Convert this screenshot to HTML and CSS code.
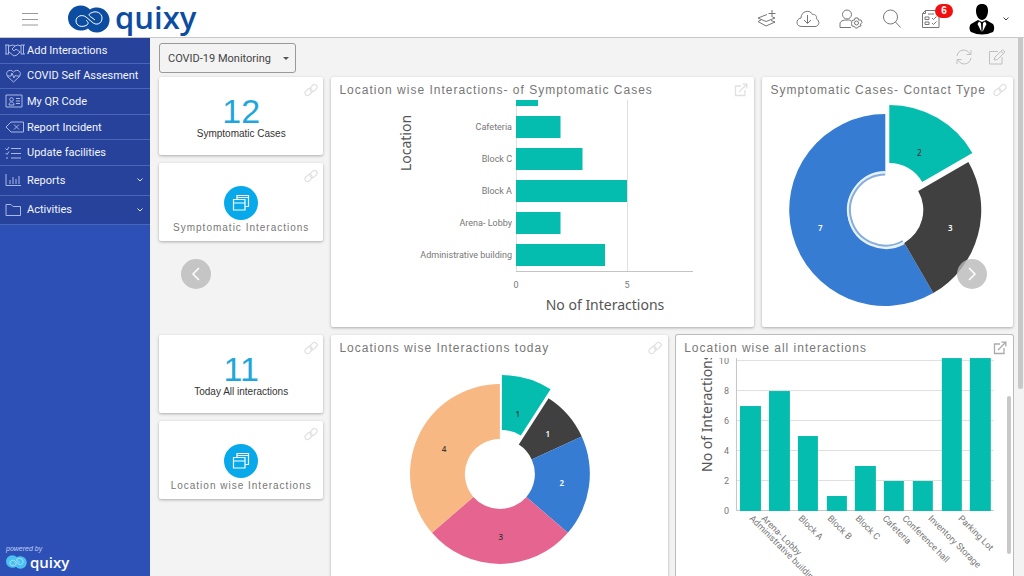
FILE: index.html
```html
<!DOCTYPE html>
<html lang="en">
<head>
<meta charset="utf-8">
<title>Quixy - COVID-19 Monitoring</title>
<link rel="stylesheet" href="styles.css">
</head>
<body>
<svg class="defs" width="0" height="0" aria-hidden="true">
  <defs>
    <symbol id="loop" viewBox="0 0 42 28">
      <path d="M12.500 0.500C17 0.500 20 2.500 22 4.500C24 3 26 2.500 29 2.500A12.500 12.500 0 0 1 29 27.500C25 27.500 22 26 20 23.500C18 25 16 25.500 12.500 25.500A12.500 12.500 0 0 1 12.500 0.500Z" fill="currentColor"/>
      <path d="M23 8C28 5 34 8 34 13C34 19 28 21 24 17L18 12C14 9 8 11 8 16C8 21 14 23 19 20C21 18 20 17 18 15M23 8C20 9 21 11 23 12L27 15" fill="none" stroke="#fff" stroke-width="1"/>
    </symbol>
    <symbol id="link" viewBox="0 0 14 14">
      <g fill="none" stroke="currentColor" stroke-width="1.200"><rect x="5.500" y="2.500" width="8" height="5" rx="2.500" transform="rotate(-45 9.500 5)"/><rect x="0.500" y="6.500" width="8" height="5" rx="2.500" transform="rotate(-45 4.500 9)"/></g>
    </symbol>
    <symbol id="open" viewBox="0 0 14 14">
      <path d="M7 3H1.500V12.500H11V7M5 9L12.500 1.500M8.500 1.200H12.800V5.500" fill="none" stroke="currentColor" stroke-width="1.300"/>
    </symbol>
    <symbol id="windows" viewBox="0 0 20 20">
      <path d="M2.500 6.500H14V17H2.500ZM2.500 10H14M6 6.500V2.500H17.500V13.500H14M6 4.500H17.500" fill="none" stroke="#fff" stroke-width="1.200"/>
    </symbol>
  </defs>
</svg>

<header class="topbar">
  <button class="icon-btn menu-btn" aria-label="Menu"><svg width="16" height="14" viewBox="0 0 16 14"><path d="M0 1.500H16M0 7.500H16M0 13H16" stroke="#999" fill="none"/></svg></button>
  <a class="brand" href="#"><svg width="42" height="28"><use href="#loop"/></svg><span>quixy</span></a>
  <nav class="tools" aria-label="Tools">
    <button class="icon-btn" aria-label="Add layer"><svg width="20" height="18" viewBox="0 0 20 18" class="line"><path d="M10 4.500L1 8L9 11.500L18 8L15.500 7M4 10L1 11.500L9 16L18 12L14 10.500M15 0V7M11.500 3.500H18.500"/></svg></button>
    <button class="icon-btn" aria-label="Download"><svg width="24" height="18" viewBox="0 0 24 18" class="line"><path d="M6 16.500C-1 16.500 0 8.500 5 8C5 1 14 -1 16.500 4.500C20 4 21 7 20.500 9C24.500 11 23 16.500 19 16.500ZM11.500 5V13M8 10L11.500 13.500L15 10"/></svg></button>
    <button class="icon-btn" aria-label="User settings"><svg width="24" height="20" viewBox="0 0 24 20" class="line"><circle cx="8" cy="5.500" r="4.500"/><path d="M12 18.500H1V15C1 12 4 11 8 11C10 11 11 11 12 12"/><circle cx="17.500" cy="14" r="2"/><path d="M16 9H19L19.500 11L22 11L23 13.500L21.500 15L22 17L19.500 17.500L18.500 19H16.500L15.500 17.500L13 17L12.500 14.500L13 11.500L15.500 11Z"/></svg></button>
    <button class="icon-btn" aria-label="Search"><svg width="20" height="20" viewBox="0 0 20 20" class="line"><circle cx="8.500" cy="8" r="7"/><path d="M13.500 13L18.500 18.500"/></svg></button>
    <button class="icon-btn tasks" aria-label="Tasks"><svg width="20" height="20" viewBox="0 0 20 20" class="line"><path d="M4.500 1.500H18V18.500H1.500V4.500ZM4.500 1.500V4.500H1.500M4 8H8V10.500H4ZM4 13H8V15.500H4ZM7 5H13M11 9L12.500 10.500L15.500 7.500M11 14L12.500 15.500L15.500 12.500"/></svg><span class="badge">6</span></button>
    <button class="icon-btn profile" aria-label="Profile"><svg width="26" height="32" viewBox="0 0 26 32"><path d="M7 8C7 2 10 1 13 1S19 2 19 8C19 13 16 17 13 17S7 13 7 8Z"/><path d="M9 17L13 19L17 17L24 21C26 24 25 28 24 29Q13 34 2 29C0 27 0 23 2 21Z"/><path d="M10 18.500L12 20L12.500 29L8.500 21ZM16 18.500L14 20L13.500 29L17.500 21Z" fill="#fff"/></svg><svg width="8" height="6" viewBox="0 0 8 6"><path d="M1.500 1.500L4 4L6.500 1.500" fill="none" stroke="#444"/></svg></button>
  </nav>
</header>

<div class="shell">
  <aside class="sidebar">
    <ul class="nav nav-links">
      <li><a href="#"><svg viewBox="0 0 20 14"><path d="M1 2V11M3.500 2V11M0 2H4M0 11H4M16 2V11M18.500 2V11M16 2H20M16 11H20M4 3L8 2L10 3L13 2L16 3M4 9L9 13L12 12L15 9M10 3L7 6L9 8L11 6L15 9"/></svg>Add Interactions</a></li>
      <li><a href="#"><svg viewBox="0 0 20 14"><path d="M8.500 13L3 8C-1 3 5 -1 8.500 3C12 -1 18 3 14 8ZM2 7H6L7 4L9 9L10.500 6L11.500 7H15"/></svg>COVID Self Assesment</a></li>
      <li><a href="#"><svg viewBox="0 0 20 14"><path d="M1 1H17V13H1ZM4 11C4 7 9 7 9 11ZM11 4.500H15M11 7H15M11 9.500H15"/><circle cx="6.500" cy="5.500" r="1.800"/></svg>My QR Code</a></li>
      <li><a href="#"><svg viewBox="0 0 20 14"><path d="M6 2H18.500V12H6L1 7ZM9 4.500L14 9.500M14 4.500L9 9.500"/></svg>Report Incident</a></li>
      <li><a href="#"><svg viewBox="0 0 20 14"><path d="M6 2.500H16M6 7.500H16M6 12H16M0.500 2.500L2 4L4 1M0.500 7L2 8.500L4 5.500M1 12H3"/></svg>Update facilities</a></li>
    </ul>
    <ul class="nav nav-groups">
      <li><a href="#"><svg viewBox="0 0 20 14"><path d="M1 1V12.500H16M5 11V7M8 11V4M11 11V6M14 11V3"/></svg>Reports<svg class="chev" viewBox="0 0 8 6"><path d="M1.500 1.500L4 4L6.500 1.500"/></svg></a></li>
      <li><a href="#"><svg viewBox="0 0 20 14"><path d="M1 12.500V1.500H6L8 3.500H15.500V12.500Z"/></svg>Activities<svg class="chev" viewBox="0 0 8 6"><path d="M1.500 1.500L4 4L6.500 1.500"/></svg></a></li>
    </ul>
    <footer class="powered"><em>powered by</em><span class="mini"><svg width="21" height="14"><use href="#loop"/></svg>quixy</span></footer>
  </aside>

  <main class="main">
    <div class="bar">
      <div class="picker-wrap"><select class="picker" aria-label="Dashboard"><option>COVID-19 Monitoring</option></select></div>
      <div class="actions">
        <button class="icon-btn" aria-label="Refresh"><svg width="16" height="16" viewBox="0 0 16 16"><path d="M1 7C2 0 11 -1 14 5M15 1V5.500H10.500M15 9C14 16 5 17 2 11M1 15V10.500H5.500" fill="none" stroke="#c0c0c0" stroke-width="1"/></svg></button>
        <button class="icon-btn" aria-label="Edit"><svg width="18" height="16" viewBox="0 0 18 16"><path d="M10 2.500H1.500V15H14V8M6 11L7 8L14.500 0.800L17 3L9.500 10.500ZM13 2.500L15.500 4.500" fill="none" stroke="#c0c0c0" stroke-width="1"/></svg></button>
      </div>
    </div>

    <div class="grid">
      <section class="card stat"><svg class="corner"><use href="#link"/></svg><strong>12</strong><span>Symptomatic Cases</span></section>

      <section class="card chart w5">
        <header><h2>Location wise Interactions- of Symptomatic Cases</h2><svg class="corner"><use href="#open"/></svg></header>
        <svg class="plot" viewBox="331 100 423 227">
          <path d="M516.500 100V271M627.500 100V271" class="rule"/>
          <path d="M516 271.500H693" class="axis"/>
          <g fill="#04bdae">
            <rect x="516" y="100" width="22" height="6"/><rect x="516" y="116" width="44.500" height="22"/><rect x="516" y="148" width="66.500" height="22"/><rect x="516" y="180" width="111" height="22"/><rect x="516" y="212" width="44.500" height="22"/><rect x="516" y="244" width="89" height="22"/>
          </g>
          <g class="tick" text-anchor="end">
            <text x="512" y="130">Cafeteria</text><text x="512" y="162">Block C</text><text x="512" y="194">Block A</text><text x="512" y="226">Arena- Lobby</text><text x="512" y="258">Administrative building</text>
          </g>
          <g class="tick" text-anchor="middle"><text x="516" y="288">0</text><text x="627" y="288">5</text></g>
          <text class="label" text-anchor="middle" x="605" y="310">No of Interactions</text>
          <text class="label" text-anchor="middle" transform="translate(411 143) rotate(-90)">Location</text>
        </svg>
      </section>

      <section class="card chart w3">
        <header><h2>Symptomatic Cases- Contact Type</h2><svg class="corner"><use href="#link"/></svg></header>
        <svg class="plot" viewBox="762 100 250 227">
          <path fill="#357cd2" d="M885 114A96 96 0 1 0 933 293.100L904 242.900A38 38 0 1 1 885 172Z"/>
          <path fill="#404041" d="M968.100 162A96 96 0 0 1 933 293.100L904 242.900A38 38 0 0 0 917.900 191Z"/>
          <path fill="#04bdae" transform="translate(4 -9)" d="M885 114A96 96 0 0 1 968.100 162L917.900 191A38 38 0 0 0 885 172Z"/>
          <path fill="none" stroke="#e6f1fb" stroke-width="3" d="M885 172.500A37.500 37.500 0 1 0 903.500 243"/>
          <path fill="none" stroke="#86aedc" stroke-width="2" d="M885 174.500A35.500 35.500 0 1 0 902.500 241"/>
          <g class="value" text-anchor="middle"><text x="919" y="156">2</text><text x="950" y="231" class="lit">3</text><text x="820" y="231" class="lit">7</text></g>
        </svg>
      </section>

      <section class="card stat tile"><svg class="corner"><use href="#link"/></svg><i class="disc"><svg width="20" height="20"><use href="#windows"/></svg></i><span>Symptomatic Interactions</span></section>

      <section class="card stat row4"><svg class="corner"><use href="#link"/></svg><strong>11</strong><span>Today All interactions</span></section>

      <section class="card chart w4">
        <header><h2>Locations wise Interactions today</h2><svg class="corner"><use href="#link"/></svg></header>
        <svg class="plot" viewBox="331 358 337 227">
          <path fill="#404041" d="M548.700 398.300A90 90 0 0 1 581.900 436.600L531.800 459.500A35 35 0 0 0 518.900 444.600Z"/>
          <path fill="#357cd2" d="M581.900 436.600A90 90 0 0 1 568 532.900L526.500 496.900A35 35 0 0 0 531.800 459.500Z"/>
          <path fill="#e56590" d="M568 532.900A90 90 0 0 1 432 532.900L473.500 496.900A35 35 0 0 0 526.500 496.900Z"/>
          <path fill="#f8b883" d="M432 532.900A90 90 0 0 1 500 384L500 439A35 35 0 0 0 473.500 496.900Z"/>
          <path fill="#04bdae" transform="translate(2 -9)" d="M500 384A90 90 0 0 1 548.700 398.300L518.900 444.600A35 35 0 0 0 500 439Z"/>
          <g class="value" text-anchor="middle"><text x="518" y="417">1</text><text x="548" y="437" class="lit">1</text><text x="562" y="486" class="lit">2</text><text x="501" y="540">3</text><text x="444" y="452">4</text></g>
        </svg>
      </section>

      <section class="card chart w4 active">
        <header><h2>Location wise all interactions</h2><svg class="corner"><use href="#open"/></svg></header>
        <svg class="plot" viewBox="676 358 337 227">
          <path class="rule" d="M737 480.500H994M737 450.500H994M737 420.500H994M737 390.500H994M737 360.500H994"/>
          <path class="axis" d="M736.500 358V510.500H994"/>
          <g fill="#04bdae">
            <rect x="740" y="406" width="21" height="105"/><rect x="769" y="391" width="21" height="120"/><rect x="798" y="436" width="20" height="75"/><rect x="827" y="496" width="20" height="15"/><rect x="855" y="466" width="21" height="45"/><rect x="884" y="481" width="20" height="30"/><rect x="913" y="481" width="20" height="30"/><rect x="942" y="358" width="20" height="153"/><rect x="970" y="358" width="21" height="153"/>
          </g>
          <g class="tick" text-anchor="end"><text x="729" y="514">0</text><text x="729" y="484">2</text><text x="729" y="454">4</text><text x="729" y="424">6</text><text x="729" y="394">8</text><text x="729" y="364">10</text></g>
          <g class="tick slant">
            <text transform="translate(749 519) rotate(45)">Administrative building</text><text transform="translate(761 519) rotate(45)">Arena- Lobby</text><text transform="translate(798 519) rotate(45)">Block A</text><text transform="translate(827 519) rotate(45)">Block B</text><text transform="translate(855 519) rotate(45)">Block C</text><text transform="translate(882 519) rotate(45)">Cafeteria</text><text transform="translate(902 519) rotate(45)">Conference hall</text><text transform="translate(928 519) rotate(45)">Inventory Storage</text><text transform="translate(958 519) rotate(45)">Parking Lot</text>
          </g>
          <text class="label" transform="translate(712 472) rotate(-90)">No of Interactions</text>
        </svg>
        <span class="inner-thumb"></span>
      </section>

      <section class="card stat tile"><svg class="corner"><use href="#link"/></svg><i class="disc"><svg width="20" height="20"><use href="#windows"/></svg></i><span>Location wise Interactions</span></section>
    </div>

    <button class="slide prev" aria-label="Previous"><svg width="10" height="16" viewBox="0 0 10 16"><path d="M8 2L2 8L8 14"/></svg></button>
    <button class="slide next" aria-label="Next"><svg width="10" height="16" viewBox="0 0 10 16"><path d="M2 2L8 8L2 14"/></svg></button>
    <span class="page-thumb"></span>
  </main>
</div>
</body>
</html>
```
FILE: styles.css
```css
* { box-sizing: border-box; }
body {
  margin: 0;
  height: 100vh;
  display: flex;
  flex-direction: column;
  overflow: hidden;
  font-family: "Liberation Sans", Arial, sans-serif;
  font-size: 11px;
  color: #333;
}
.defs { position: absolute; }
button { font: inherit; }
.icon-btn { display: flex; align-items: center; padding: 0; border: 0; background: none; }
.line { fill: none; stroke: #777; stroke-width: 1; }

.topbar {
  display: flex;
  align-items: center;
  flex: none;
  height: 38px;
  padding: 0 14px 0 22px;
  background: #fff;
  border-bottom: 1px solid #c8c8c8;
}
.brand {
  display: flex;
  align-items: center;
  gap: 5px;
  margin-left: 30px;
  color: #0c4da2;
  text-decoration: none;
  font: 600 31px/36px "Open Sans", "Noto Sans", sans-serif;
}
.brand span { margin-top: -4px; }
.tools { display: flex; align-items: center; gap: 19px; margin-left: auto; }
.tasks { position: relative; }
.badge {
  position: absolute;
  left: 14px;
  top: -5px;
  width: 18px;
  border-radius: 7px;
  background: #f01010;
  color: #fff;
  font-size: 10px;
  font-weight: 700;
  line-height: 14px;
  text-align: center;
}
.profile { gap: 7px; margin-left: 9px; }

.shell { display: flex; flex: 1; min-height: 0; }
.sidebar {
  display: flex;
  flex-direction: column;
  flex: none;
  width: 150px;
  background: #2d50b6;
  color: #fff;
}
.nav { display: grid; grid-auto-rows: 1fr; margin: 0; padding: 0; list-style: none; background: #27429a; font-family: Roboto, Arial, sans-serif; }
.nav-links { height: 128px; }
.nav-groups { height: 59px; }
.nav li { display: flex; border-bottom: 1px solid #4a66b8; }
.nav a { display: flex; align-items: center; flex: 1; gap: 2px; padding: 0 6px 0 5px; color: #f2f5ff; text-decoration: none; }
.nav svg { width: 20px; height: 14px; fill: none; stroke: #a9b9e6; stroke-width: 1; }
.nav .chev { width: 8px; height: 6px; margin-left: auto; stroke: #dfe6ff; }
.powered { margin-top: auto; padding: 0 6px 5px; }
.powered em { display: block; font-size: 7px; line-height: 8px; color: #c3cff2; }
.mini { display: flex; align-items: center; gap: 3px; font: 600 15px/18px "Open Sans", "Noto Sans", sans-serif; }
.mini svg { color: #4cc0f0; }

.main { position: relative; flex: 1; min-width: 0; overflow: hidden; padding: 5px 11px 0 9px; background: #f3f3f3; }
.bar { display: flex; justify-content: space-between; height: 34px; }
.picker-wrap { position: relative; height: 30px; }
.picker-wrap::after {
  content: "";
  position: absolute;
  top: 14px;
  right: 7px;
  border: 3px solid transparent;
  border-top-color: #555;
  pointer-events: none;
}
.picker {
  appearance: none;
  width: 137px;
  height: 30px;
  padding: 0 8px;
  border: 1px solid #999;
  border-radius: 3px;
  background: #f3f3f3;
  color: #444;
  font: 11px Roboto, Arial, sans-serif;
}
.actions { display: flex; gap: 16px; padding-right: 7px; align-items: center; height: 28px; }

.grid {
  display: grid;
  grid-template-columns: repeat(10, 1fr);
  grid-auto-rows: 78px;
  gap: 8px;
}
.card { position: relative; min-width: 0; border-radius: 2px; background: #fff; box-shadow: 0 1px 3px rgba(0, 0, 0, .3); }
.corner { width: 14px; height: 14px; color: #e0e0e0; }
.stat { grid-column: 1 / span 2; display: flex; flex-direction: column; align-items: center; justify-content: flex-end; padding-bottom: 15px; }
.stat .corner { position: absolute; top: 6px; right: 5px; }
.stat strong { color: #1ea7dd; font-size: 34px; font-weight: 400; line-height: 33px; }
.stat span { font-size: 10px; line-height: 12px; }
.disc { display: flex; align-items: center; justify-content: center; width: 34px; height: 34px; border-radius: 50%; background: #08a9ea; }
.tile { padding-bottom: 6px; }
.tile span { line-height: 15px; letter-spacing: 1px; color: #777; }
.row4 { grid-row: 4; }
.chart { grid-row: span 3; display: flex; flex-direction: column; }
.w5 { grid-column: span 5; }
.w3 { grid-column: span 3; }
.w4 { grid-column: span 4; }
.chart header { display: flex; justify-content: space-between; align-items: center; height: 23px; flex: none; padding: 2px 6px 0 8px; }
.chart h2 { margin: 0; font-size: 12px; font-weight: 400; letter-spacing: 1px; color: #777; white-space: nowrap; }
.plot { display: block; width: 100%; flex: 1; min-height: 0; font-family: "Noto Sans", sans-serif; }
.active { box-shadow: 0 0 0 1px #bbb; }
.active .corner { color: #aaa; }
.rule { stroke: #dfdfdf; fill: none; }
.axis { stroke: #c4c4c4; fill: none; }
.tick { font-family: Roboto, sans-serif; font-size: 9px; fill: #777; }
.label { font-size: 14px; fill: #555; }
.value { font-size: 8px; font-weight: 500; fill: #333; }
.value .lit { fill: #fff; font-weight: 600; }

.inner-thumb { position: absolute; top: 61px; right: 2px; width: 4px; height: 158px; border-radius: 2px; background: #c8c8c8; }
.page-thumb { position: absolute; top: 0; right: 1px; width: 5px; height: 351px; border-radius: 0 0 3px 3px; background: #c8c8c8; }
.slide {
  position: absolute;
  top: 221px;
  display: flex;
  align-items: center;
  justify-content: center;
  width: 30px;
  height: 30px;
  padding: 0;
  border: 0;
  border-radius: 50%;
  background: rgba(185, 185, 185, .8);
}
.slide path { fill: none; stroke: #fff; stroke-width: 1.5; }
.prev { left: 31px; }
.next { right: 37px; }
```
